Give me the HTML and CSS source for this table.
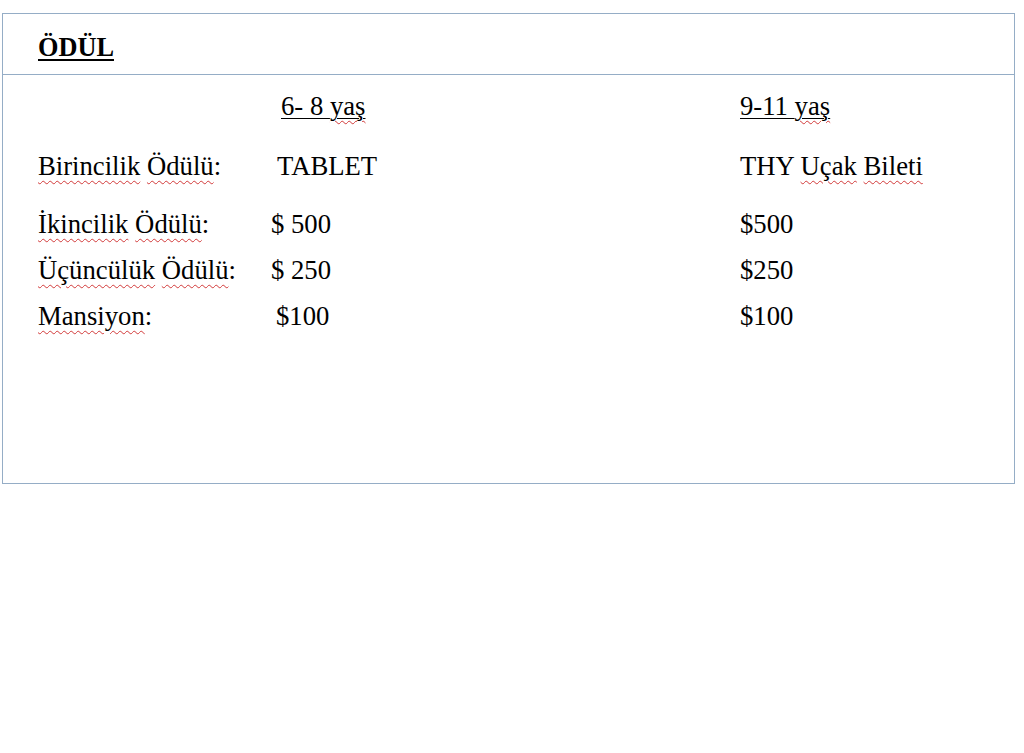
FILE: index.html
```html
<!DOCTYPE html>
<html lang="tr">
<head>
<meta charset="utf-8">
<title>ÖDÜL</title>
<link rel="stylesheet" href="styles.css">
</head>
<body>
<section class="box">
  <header class="box-head"><span class="title">ÖDÜL</span></header>
  <div class="table">
    <div class="cell"></div>
    <div class="cell head off-10"><span class="ul">6- 8 <span class="sp">yaş</span></span></div>
    <div class="cell head"><span class="ul">9-11 <span class="sp">yaş</span></span></div>

    <div class="cell first"><span class="sp">Birincilik</span> <span class="sp">Ödülü</span>:</div>
    <div class="cell first off-6">TABLET</div>
    <div class="cell first">THY <span class="sp">Uçak</span> <span class="sp">Bileti</span></div>

    <div class="cell"><span class="sp">İkincilik</span> <span class="sp">Ödülü</span>:</div>
    <div class="cell">$ 500</div>
    <div class="cell">$500</div>

    <div class="cell"><span class="sp">Üçüncülük</span> <span class="sp">Ödülü</span>:</div>
    <div class="cell">$ 250</div>
    <div class="cell">$250</div>

    <div class="cell"><span class="sp">Mansiyon</span>:</div>
    <div class="cell off-5">$100</div>
    <div class="cell">$100</div>
  </div>
</section>
</body>
</html>
```
FILE: styles.css
```css
html, body {
  margin: 0;
  padding: 0;
  background: #ffffff;
}
body {
  font-family: "Liberation Serif", "Times New Roman", serif;
  color: #000;
  font-size: 26px;
}
.box {
  margin: 13px 0 0 2px;
  width: 1011px;
  height: 469px;
  border: 1px solid #95adc6;
}
.box-head {
  height: 42px;
  padding: 18px 0 0 35px;
  line-height: 32px;
  border-bottom: 1px solid #95adc6;
}
.title {
  font-weight: bold;
  font-size: 26.3px;
  text-decoration: underline;
  text-decoration-thickness: 2px;
  text-underline-offset: 3px;
}
.table {
  display: grid;
  grid-template-columns: 233px 469px auto;
  padding: 8px 0 0 35px;
  line-height: 46px;
  font-size: 26.7px;
}
.cell {
  white-space: nowrap;
}
.head {
  margin-bottom: 14px;
}
.first {
  margin-bottom: 12px;
}
.off-10 { padding-left: 10px; }
.off-6 { padding-left: 6px; }
.off-5 { padding-left: 5px; }
.ul {
  text-decoration: underline;
  text-decoration-thickness: 1px;
  text-underline-offset: 3px;
}
.sp {
  text-decoration: underline wavy #d23a3a;
  text-decoration-thickness: 1px;
  text-underline-offset: 5px;
}
```
